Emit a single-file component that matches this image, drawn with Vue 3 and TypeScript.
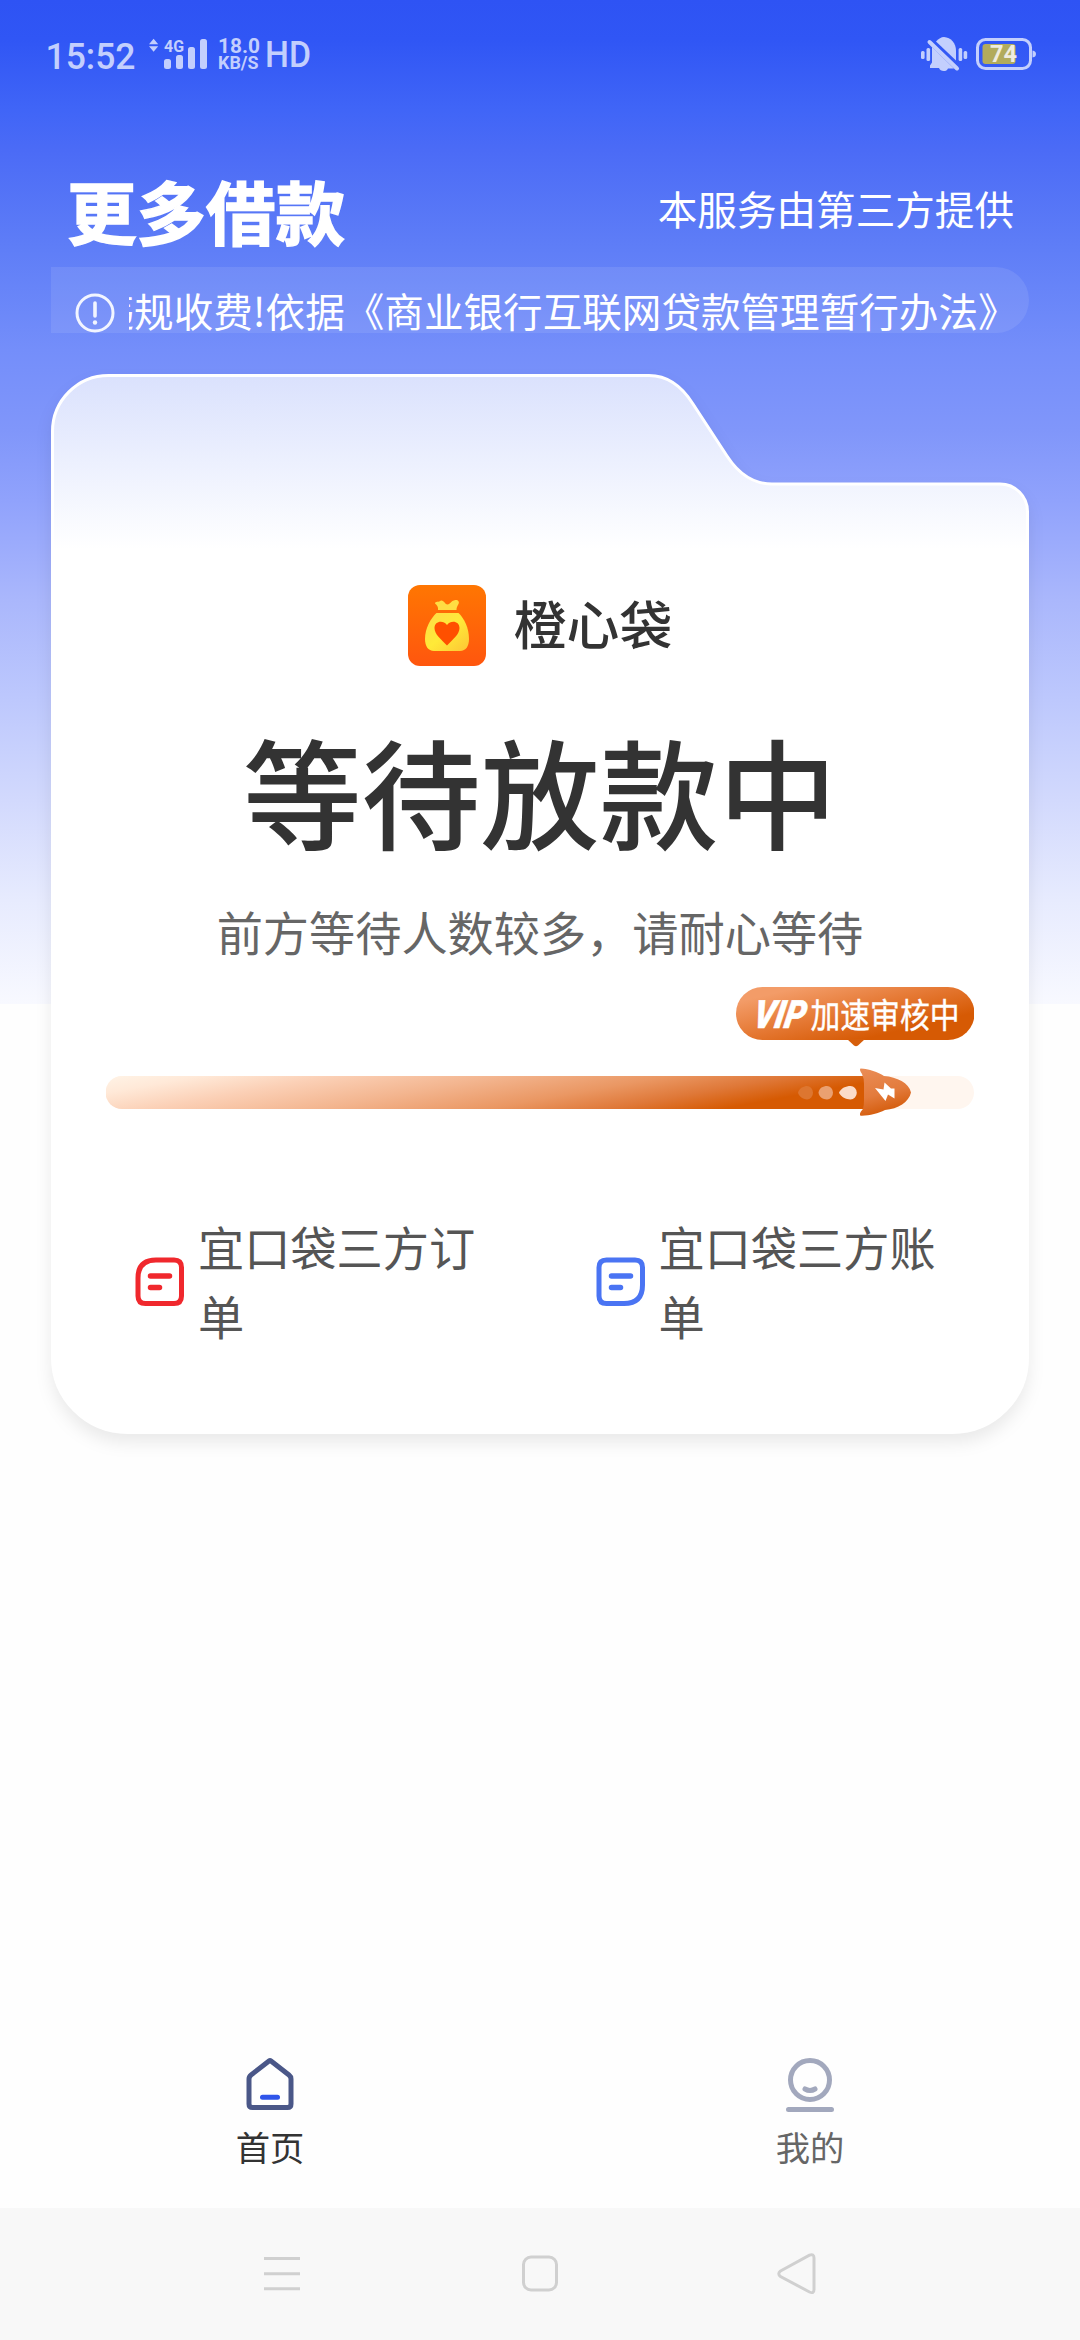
<script setup lang="ts">
import { ref } from 'vue'

interface Shortcut {
  label: string
  color: string
  outline: string
}

const shortcuts: Shortcut[] = [
  {
    label: '宜口袋三方订单',
    color: '#f0282d',
    outline: 'M21 3H39Q46.500 3 46.500 10.500V39Q46.500 46.500 39 46.500H10.500Q3 46.500 3 39V21Q3 3 21 3Z',
  },
  {
    label: '宜口袋三方账单',
    color: '#4a74f3',
    outline: 'M10.500 3H39Q46.500 3 46.500 10.500V28Q46.500 46.500 28 46.500H10.500Q3 46.500 3 39V10.500Q3 3 10.500 3Z',
  },
]

const activeTab = ref<'home' | 'mine'>('home')
</script>

<template>
  <div class="page">
    <div class="status">
      <svg class="status-left" width="280" height="50" viewBox="40 30 280 50">
        <g fill="#c3cffd">
          <text x="45.500" y="68.500" font-size="37" font-weight="500" textLength="90" lengthAdjust="spacingAndGlyphs">15:52</text>
          <path d="M149 44.200L153.600 38.800L158.200 44.200ZM149 46.300L153.600 51.700L158.200 46.300Z" />
          <text x="164" y="51.500" font-size="17" font-weight="700" textLength="20" lengthAdjust="spacingAndGlyphs">4G</text>
          <rect x="164" y="59" width="7" height="10" rx="2.500" />
          <rect x="176" y="55" width="7" height="14" rx="2.500" />
          <rect x="188" y="47" width="7" height="22" rx="2.500" />
          <rect x="200" y="39" width="7" height="30" rx="2.500" />
          <text x="218" y="53" font-size="21" font-weight="700" textLength="42" lengthAdjust="spacingAndGlyphs">18.0</text>
          <text x="218" y="69" font-size="17.500" font-weight="700" textLength="40.500" lengthAdjust="spacingAndGlyphs">KB/S</text>
          <text x="265" y="67" font-size="36.500" font-weight="500" textLength="46" lengthAdjust="spacingAndGlyphs">HD</text>
        </g>
      </svg>
      <svg class="status-right" width="120" height="50" viewBox="917 30 120 50">
        <g fill="#c3cffd">
          <rect x="920" y="51" width="3.600" height="8" rx="1.500" />
          <rect x="925.500" y="48" width="3.600" height="13" rx="1.500" />
          <rect x="957.600" y="48" width="3.600" height="13" rx="1.500" />
          <rect x="962.600" y="51" width="3.600" height="8" rx="1.500" />
          <path d="M935 41.500C938 38.500 940 37 943 37C950 37.500 955 43 955 51V60.500Z" />
          <path d="M931 47L953 68.500H947C946 72 939 72 938 68H929V65.500L931 62.500Z" />
          <path d="M928.500 42L956 68.500" fill="none" stroke="#c3cffd" stroke-width="4" stroke-linecap="round" />
        </g>
        <rect x="976.500" y="39.500" width="53" height="29" rx="8" fill="none" stroke="#c3cffd" stroke-width="3" />
        <path d="M1031.500 50.500Q1035 51 1035 54Q1035 57 1031.500 57.500Z" fill="#c3cffd" />
        <rect x="981.500" y="44" width="33" height="20" rx="3" fill="#b2ab5c" />
        <text x="989" y="62" font-size="23.500" font-weight="700" fill="#efecdf">74</text>
      </svg>
    </div>

    <header class="head">
      <h1 class="title">更多借款</h1>
      <span class="provider">本服务由第三方提供</span>
    </header>

    <div class="notice">
      <svg width="40" height="40" viewBox="0 0 40 40" fill="none" stroke="#f2f5ff">
        <circle cx="20" cy="20" r="18" stroke-width="3" />
        <path d="M20 10V23" stroke-width="3.600" stroke-linecap="round" />
        <circle cx="20" cy="29.500" r="2.200" fill="#f2f5ff" stroke="none" />
      </svg>
      <div class="marquee"><span>违规收费!依据《商业银行互联网贷款管理暂行办法》</span></div>
    </div>

    <main class="card">
      <svg class="folder" width="978" height="1060" viewBox="0 0 978 1060">
        <defs>
          <linearGradient id="folderFill" gradientUnits="userSpaceOnUse" x1="0" y1="0" x2="0" y2="175">
            <stop offset="0" stop-color="#dae1fd" />
            <stop offset="0.500" stop-color="#ecf0fe" />
            <stop offset="1" stop-color="#fff" />
          </linearGradient>
        </defs>
        <path
          d="M1.500 57.500A56 56 0 0 1 57.500 1.500H598C618 1.500 632 14 642 30L676 82C687 99 702 110 721 110H949A27.500 27.500 0 0 1 976.500 137.500V983.500A75 75 0 0 1 901.500 1058.500H76.500A75 75 0 0 1 1.500 983.500Z"
          fill="url(#folderFill)" stroke="#fff" stroke-width="3"
        />
      </svg>

      <div class="content">
        <div class="brand">
          <svg width="78" height="81" viewBox="0 0 78 81">
            <defs>
              <linearGradient id="brandBg" x1="0" y1="0" x2="0" y2="1">
                <stop offset="0" stop-color="#ff7602" />
                <stop offset="1" stop-color="#ff560e" />
              </linearGradient>
              <linearGradient id="bag" x1="0" y1="0" x2="1" y2="1">
                <stop offset="0" stop-color="#ffdc48" />
                <stop offset="0.500" stop-color="#ffea38" />
                <stop offset="1" stop-color="#fdc535" />
              </linearGradient>
            </defs>
            <rect width="78" height="81" rx="12" fill="url(#brandBg)" />
            <path d="M27 18.500C27 16 31 17.500 33 15.500C36 15 37 19.500 39.500 19.500C42 19.500 43 16 46 15.500C49 14 52 16 50.500 19C49 21.500 48.500 23 48.500 25H30C30.500 22 29 20 27 18.500Z" fill="#ffdd43" />
            <path d="M28.500 28H50.500C56 33 61 43 61 54C61 61 58 66 52 66H26C20 66 17 61 17 54C17 43 23 33 28.500 28Z" fill="url(#bag)" />
            <path d="M39 60.500C33 54 26.500 49.500 26.500 43C26.500 36 35 34.500 39 40C43 34.500 51.500 36 51.500 43C51.500 49.500 45 54 39 60.500Z" fill="#ff5000" />
          </svg>
          <span>橙心袋</span>
        </div>

        <h2 class="headline">等待放款中</h2>
        <p class="hint">前方等待人数较多，请耐心等待</p>

        <svg class="progress" width="868" height="134" viewBox="105 985 868 134">
          <defs>
            <linearGradient id="barFill" gradientUnits="userSpaceOnUse" x1="105" y1="1076" x2="135" y2="1241">
              <stop offset="0" stop-color="#fff3e6" />
              <stop offset="0.100" stop-color="#ffe9d8" />
              <stop offset="0.240" stop-color="#fbd0b6" />
              <stop offset="0.420" stop-color="#f3b58f" />
              <stop offset="0.600" stop-color="#ea9763" />
              <stop offset="0.730" stop-color="#df7838" />
              <stop offset="0.850" stop-color="#d65a02" />
              <stop offset="1" stop-color="#d65a02" />
            </linearGradient>
            <linearGradient id="tipFill" gradientUnits="userSpaceOnUse" x1="845" y1="976" x2="862" y2="1047">
              <stop offset="0" stop-color="#f39c68" />
              <stop offset="0.500" stop-color="#e47630" />
              <stop offset="0.900" stop-color="#d65a04" />
            </linearGradient>
            <linearGradient id="rocket" x1="0" y1="0" x2="0.300" y2="1">
              <stop offset="0" stop-color="#ea8d57" />
              <stop offset="0.600" stop-color="#e37b3c" />
              <stop offset="1" stop-color="#d45c0c" />
            </linearGradient>
          </defs>
          <rect x="735" y="987" width="238.500" height="53" rx="26.500" fill="url(#tipFill)" />
          <path d="M846 1039H864L857 1045.500Q855 1047 853 1045.500Z" fill="#d65e0a" />
          <text class="vip" transform="translate(751 1028) skewX(-10)" font-size="39" font-weight="900" font-style="italic" textLength="52" lengthAdjust="spacingAndGlyphs" fill="#fff" stroke="#fff" stroke-width="0.600">VIP</text>
          <text class="tip" x="809.500" y="1027.500" font-size="34" textLength="149" lengthAdjust="spacingAndGlyphs" fill="#fff" stroke="#fff" stroke-width="0.400">加速审核中</text>

          <rect x="105" y="1076" width="868" height="33" rx="16.500" fill="#fff6ef" />
          <path d="M121 1076H866V1109H121A16.500 16.500 0 0 1 121 1076Z" fill="url(#barFill)" />
          <path d="M797 1092.700C798 1088 803 1086 806 1086A6 6.700 0 0 1 806 1099.400C803 1099.400 798 1097 797 1092.700Z" fill="#dd7630" />
          <path d="M817.500 1092.700C818 1088 822 1086 826 1086A6 6.700 0 0 1 826 1099.400C822 1099.400 818 1097 817.500 1092.700Z" fill="#eaa071" />
          <path d="M838 1092.700C840 1088 845 1086 849.500 1086A6.300 6.700 0 0 1 849.500 1099.400C845 1099.400 840 1097 838 1092.700Z" fill="#fbdcc9" />
          <path d="M859.500 1068.500C868 1069 877 1072 883 1076C896 1077 908 1083 910 1092.500C908 1102 897 1109 884 1110C877 1113.500 868 1116 859.500 1115.700C858 1114 860 1111 862 1109Q863 1106 863 1100V1084Q863 1078 861 1074Q858 1069.500 859.500 1068.500Z" fill="url(#rocket)" />
          <path d="M874 1088L882.500 1089.500L883.500 1082.500L890 1088.500L893.500 1088.500V1098.500L887 1094.500L884.500 1101Z" fill="#fff" />
        </svg>

        <nav class="shortcuts">
          <a v-for="item in shortcuts" :key="item.label" class="shortcut">
            <svg width="49.500" height="49.500" viewBox="0 0 49.500 49.500" fill="none" :stroke="item.color">
              <path :d="item.outline" stroke-width="5" />
              <path d="M15.500 19H34.500M15.500 30.500H24.500" stroke-width="5.500" stroke-linecap="round" />
            </svg>
            <span>{{ item.label }}</span>
          </a>
        </nav>
      </div>
    </main>

    <footer class="tabs">
      <a class="tab" :class="{ active: activeTab === 'home' }" @click="activeTab = 'home'">
        <svg width="60" height="60" viewBox="0 0 60 60" fill="none">
          <path d="M29 7Q30 6.200 31 7L49 21Q51 22.500 51 25V50Q51 53.500 47.500 53.500H12.500Q9 53.500 9 50V25Q9 22.500 11 21Z" stroke="#4a5788" stroke-width="5" stroke-linejoin="round" />
          <path d="M22.500 43.300H37.500" stroke="#2f55ea" stroke-width="5" stroke-linecap="round" />
        </svg>
        <span>首页</span>
      </a>
      <a class="tab" :class="{ active: activeTab === 'mine' }" @click="activeTab = 'mine'">
        <svg width="60" height="60" viewBox="0 0 60 60" fill="none" stroke="#a2a8bd" stroke-width="5" stroke-linecap="round">
          <circle cx="30" cy="26" r="19.500" />
          <path d="M25 35Q30 38 35 35M8.500 55.500H51.500" />
        </svg>
        <span>我的</span>
      </a>
    </footer>

    <div class="sysnav">
      <svg width="46" height="46" viewBox="0 0 46 46"><path d="M5 7.500H41M5 22.700H41M5 37.700H41" /></svg>
      <svg width="46" height="46" viewBox="0 0 46 46"><rect x="6.500" y="6" width="33" height="33" rx="7.500" /></svg>
      <svg width="46" height="46" viewBox="0 0 46 46"><path d="M6.500 20L35.500 4.200Q40 2.500 40 7V38.500Q40 43 35.500 41L6.500 25.500Q3 22.700 6.500 20Z" /></svg>
    </div>
  </div>
</template>

<style>
body {
  background: #fff;
}
</style>

<style scoped>
.page {
  display: flex;
  flex-direction: column;
  width: 1080px;
  height: 2340px;
  overflow: hidden;
  font-family: "Noto Sans CJK SC", sans-serif;
  background: #fefefe linear-gradient(
    #2e53f4 0, #3056f5 40px, #4065f7 110px, #4b6bf6 150px, #5f7ef7 250px,
    #748efa 350px, #8096fa 430px, #90a2fc 500px, #aab7fc 600px,
    #bdc8fd 700px, #d2d9fd 800px, #e7ebfe 900px, #f8f9ff 1004px
  ) no-repeat 0 0 / 100% 1004px;
}

.status {
  display: flex;
  justify-content: space-between;
  height: 140px;
  padding: 30px 42px 0 40px;
  box-sizing: border-box;
  font-family: Roboto, sans-serif;
}

.head {
  display: flex;
  align-items: center;
  justify-content: space-between;
  height: 127px;
  padding: 0 66px 0 67px;
  color: #fff;
}

.title {
  margin: 12px 0 0;
  font-size: 69.500px;
  line-height: 90px;
  font-weight: 700;
  -webkit-text-stroke: 1.500px #fff;
}

.provider {
  margin-top: 9px;
  font-size: 39.600px;
  line-height: 60px;
}

.notice {
  display: flex;
  align-items: flex-end;
  height: 66px;
  margin: 0 51px;
  padding: 0 20px 0 24px;
  box-sizing: border-box;
  border-radius: 0 33px 33px 0;
  background: rgba(255, 255, 255, 0.09);
  color: #fff;
}

.notice svg {
  flex: none;
}

.marquee {
  display: flex;
  flex: 1;
  height: 60px;
  margin: 0 0 -7px 14px;
  overflow: hidden;
  font-size: 39.600px;
  line-height: 60px;
  white-space: nowrap;
}

.marquee span {
  margin-left: -34.500px;
}

.card {
  display: grid;
  grid-template-columns: 978px;
  width: 978px;
  height: 1060px;
  margin: 41px auto 0;
}

.folder,
.content {
  grid-area: 1 / 1;
}

.folder {
  overflow: visible;
  filter: drop-shadow(0 9px 8px rgba(0, 0, 0, 0.08));
}

.content {
  position: relative;
  display: flex;
  flex-direction: column;
  align-items: center;
}

.brand {
  display: flex;
  align-items: center;
  gap: 28px;
  margin-top: 211px;
  height: 81px;
  font-size: 52.800px;
  font-weight: 500;
  line-height: 78px;
  color: #333;
}

.brand span {
  margin-top: -8px;
}

.headline {
  margin: 35px 0 0;
  font-size: 118.800px;
  font-weight: 500;
  line-height: 176px;
  color: #333;
}

.hint {
  margin: 19px 0 0;
  font-size: 46.200px;
  line-height: 70px;
  color: #666;
}

.progress {
  margin-top: 19px;
  font-family: Roboto, sans-serif;
}

.tip {
  font-family: "Noto Sans CJK SC", sans-serif;
}

.shortcuts {
  display: flex;
  align-self: stretch;
  margin-top: 95px;
  padding-left: 84px;
}

.shortcut {
  display: flex;
  flex: none;
  align-items: center;
  width: 460.500px;
}

.shortcut + .shortcut {
  width: 360px;
}

.shortcut svg {
  flex: none;
}

.shortcut span {
  width: 290px;
  margin: -3px 0 0 13.500px;
  font-size: 46.200px;
  line-height: 69.300px;
  color: #555;
}

.tabs {
  display: flex;
  height: 168px;
  margin-top: auto;
}

.tab {
  display: flex;
  flex: 1;
  flex-direction: column;
  align-items: center;
  padding-top: 14px;
  font-size: 34.300px;
  line-height: 50px;
  color: #666;
}

.tab.active {
  color: #333;
}

.tab span {
  margin-top: 7px;
}

.sysnav {
  display: flex;
  align-items: center;
  height: 132px;
  padding: 0 260px 0 259px;
  justify-content: space-between;
  background: #f8f8f8;
}

.sysnav svg {
  fill: none;
  stroke: #d0d0d0;
  stroke-width: 3;
}
</style>
